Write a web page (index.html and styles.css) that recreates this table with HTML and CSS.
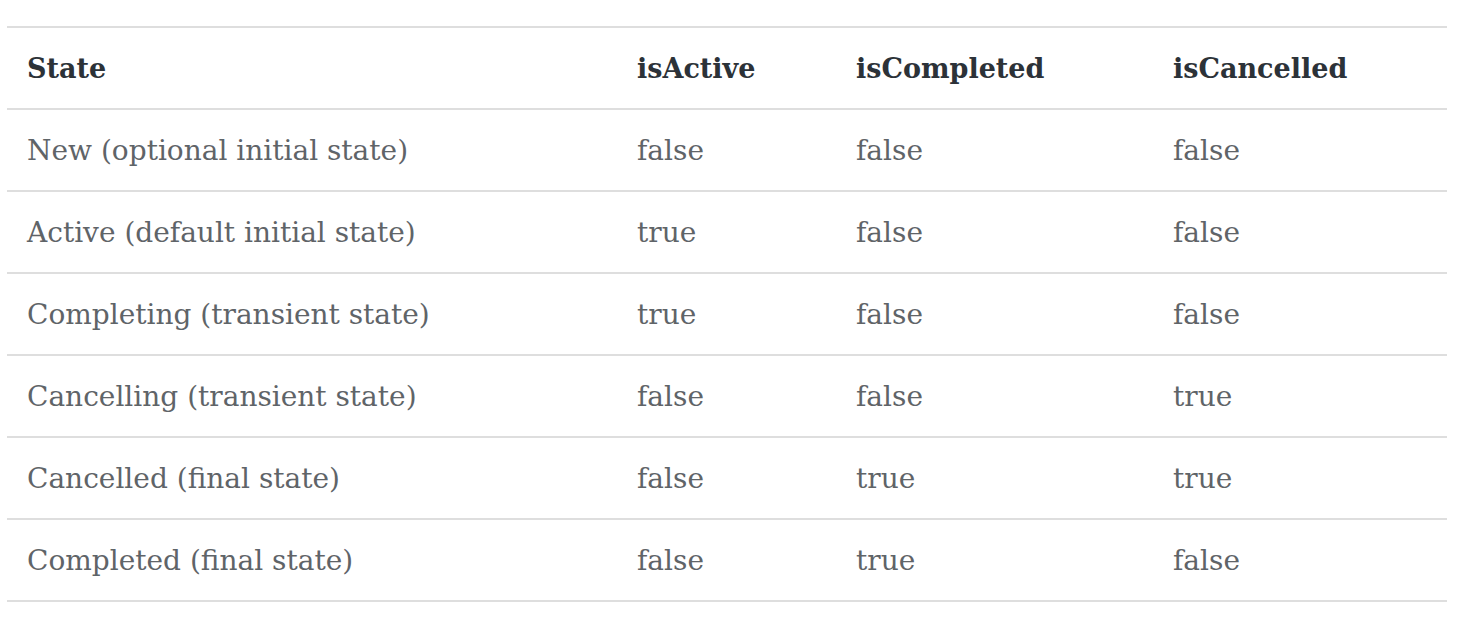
FILE: index.html
```html
<!DOCTYPE html>
<html>
<head>
<meta charset="utf-8">
<link rel="stylesheet" href="styles.css">
</head>
<body>
<div class="wrap">
<table class="states">
  <thead>
    <tr><th class="c1">State</th><th class="c2">isActive</th><th class="c3">isCompleted</th><th class="c4">isCancelled</th></tr>
  </thead>
  <tbody>
    <tr><td>New (optional initial state)</td><td>false</td><td>false</td><td>false</td></tr>
    <tr><td>Active (default initial state)</td><td>true</td><td>false</td><td>false</td></tr>
    <tr><td>Completing (transient state)</td><td>true</td><td>false</td><td>false</td></tr>
    <tr><td>Cancelling (transient state)</td><td>false</td><td>false</td><td>true</td></tr>
    <tr><td>Cancelled (final state)</td><td>false</td><td>true</td><td>true</td></tr>
    <tr><td>Completed (final state)</td><td>false</td><td>true</td><td>false</td></tr>
  </tbody>
</table>
</div>
</body>
</html>
```
FILE: styles.css
```css
html, body {
  margin: 0;
  padding: 0;
  background: #ffffff;
}
.wrap {
  padding: 26px 0 0 7px;
}
.states {
  width: 1440px;
  border-collapse: collapse;
  table-layout: fixed;
  font-family: "DejaVu Serif", "Liberation Serif", serif;
  font-size: 28px;
  border-top: 2px solid #dedede;
}
.states th, .states td {
  text-align: left;
  padding: 0 0 0 20px;
  height: 80px;
  border-bottom: 2px solid #dedede;
  white-space: nowrap;
}
.states th {
  color: #2c3238;
  font-weight: bold;
  font-size: 27px;
}
.states td {
  color: #5f6468;
}
.c1 { width: 590px; }
.c2 { width: 199px; }
.c3 { width: 297px; }
.c4 { width: 274px; }
```
